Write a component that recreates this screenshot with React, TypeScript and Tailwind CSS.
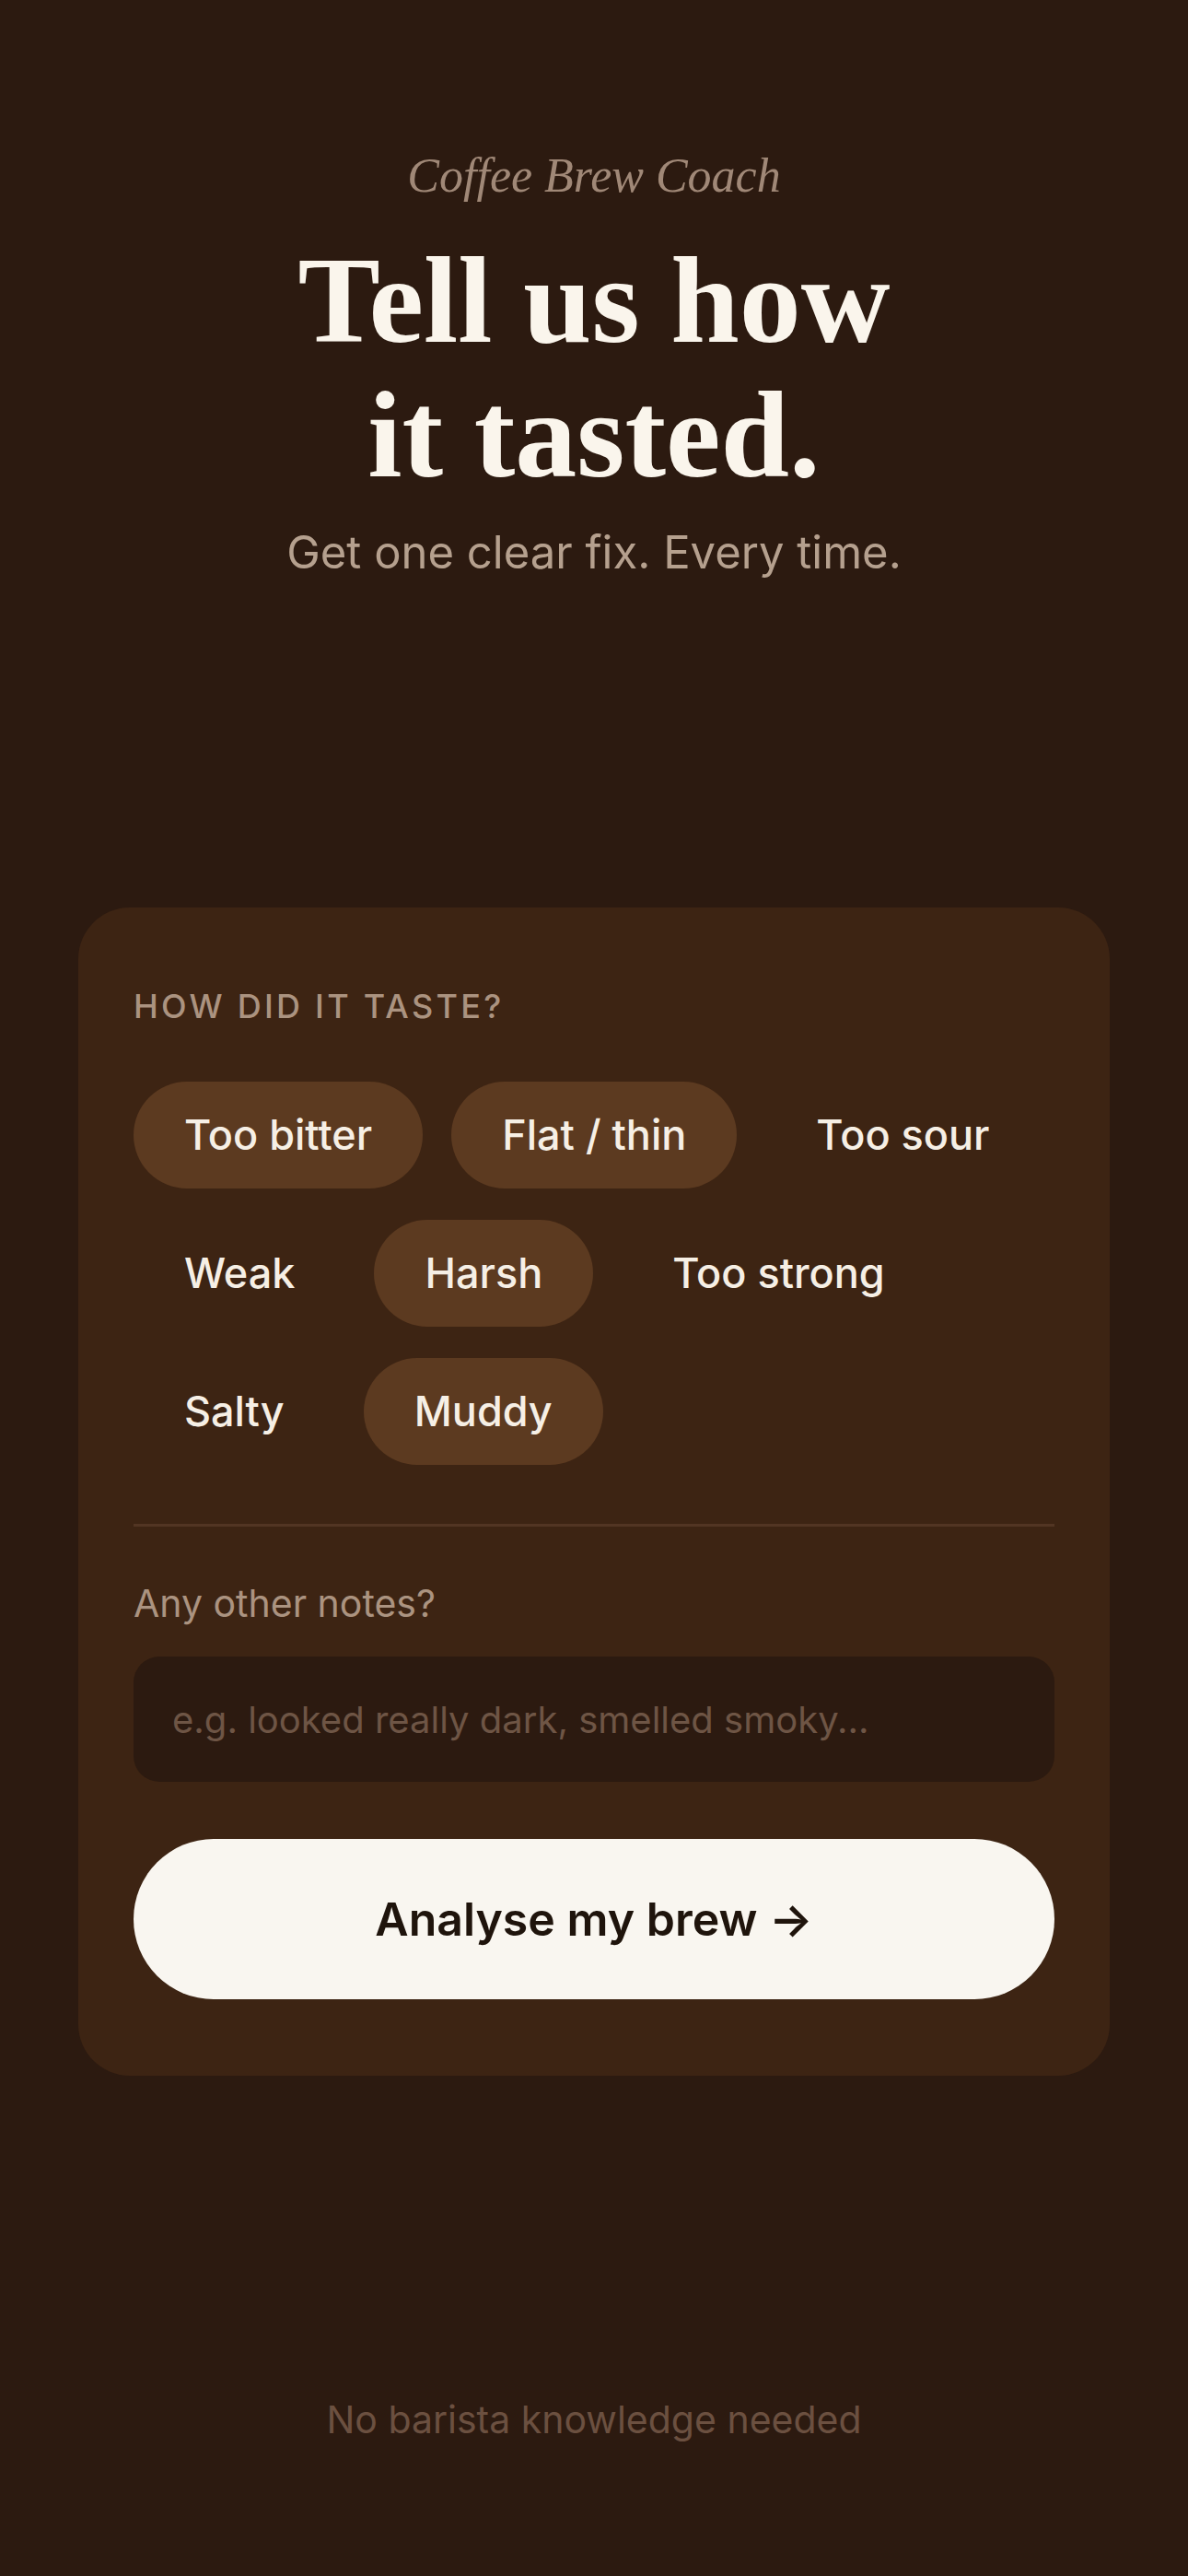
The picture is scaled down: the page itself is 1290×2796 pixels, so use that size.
const ROWS = [
  [
    { label: "Too bitter", on: true },
    { label: "Flat / thin", on: true },
    { label: "Too sour", on: false },
  ],
  [
    { label: "Weak", on: false },
    { label: "Harsh", on: true },
    { label: "Too strong", on: false },
  ],
  [
    { label: "Salty", on: false },
    { label: "Muddy", on: true },
  ],
];

const sans = "font-['Inter','Liberation_Sans',sans-serif]";
const serif = "font-['Liberation_Serif','DejaVu_Serif',serif]";

function Chip({ label, on }: { label: string; on: boolean }) {
  return (
    <button
      className={
        "flex h-[116px] items-center rounded-full px-[55px] text-[45px] font-medium text-[#f6efe5] " +
        (on ? "bg-[#5c3a20]" : "bg-transparent")
      }
    >
      {label}
    </button>
  );
}

export default function App() {
  return (
    <div className={`flex min-h-[2796px] w-full flex-col items-center bg-[#2c1a10] ${sans}`}>
      <p className={`mt-[160px] text-[52px] italic leading-[62px] text-[#a08877] ${serif}`}>
        Coffee Brew Coach
      </p>
      <h1
        className={`mt-[31px] text-center text-[134px] font-bold leading-[146px] text-[#faf5ec] ${serif}`}
      >
        Tell us how
        <br />
        it tasted.
      </h1>
      <p className="mt-[26px] text-[49px] leading-[58px] text-[#b5a08e]">
        Get one clear fix. Every time.
      </p>

      <div className="mt-[356px] w-[1120px] rounded-[56px] bg-[#3d2413] px-[60px] pb-[83px] pt-[84px]">
        <p className="text-[36px] font-medium uppercase leading-[46px] tracking-[0.09em] text-[#ab9380]">
          How did it taste?
        </p>

        <div className="mt-[59px] flex flex-col gap-[34px]">
          {ROWS.map((row, i) => (
            <div key={i} className="flex gap-[31px]">
              {row.map((t) => (
                <Chip key={t.label} {...t} />
              ))}
            </div>
          ))}
        </div>

        <div className="mt-[64px] h-[3px] bg-[#523523]" />

        <p className="mt-[58px] text-[41px] leading-[50px] text-[#ab9380]">Any other notes?</p>

        <input
          placeholder="e.g. looked really dark, smelled smoky..."
          className="mt-[33px] h-[136px] w-full rounded-[28px] bg-[#2c1a10] px-[42px] text-[40px] text-[#f6efe5] outline-none placeholder:text-[#6e5545]"
        />

        <button className="mt-[62px] flex h-[174px] w-full items-center justify-center rounded-full bg-[#f9f6f0] text-[50px] font-semibold text-[#1f140c]">
          Analyse my brew →
        </button>
      </div>

      <p className="mt-[348px] text-[41px] leading-[50px] text-[#6b5040]">
        No barista knowledge needed
      </p>
    </div>
  );
}
